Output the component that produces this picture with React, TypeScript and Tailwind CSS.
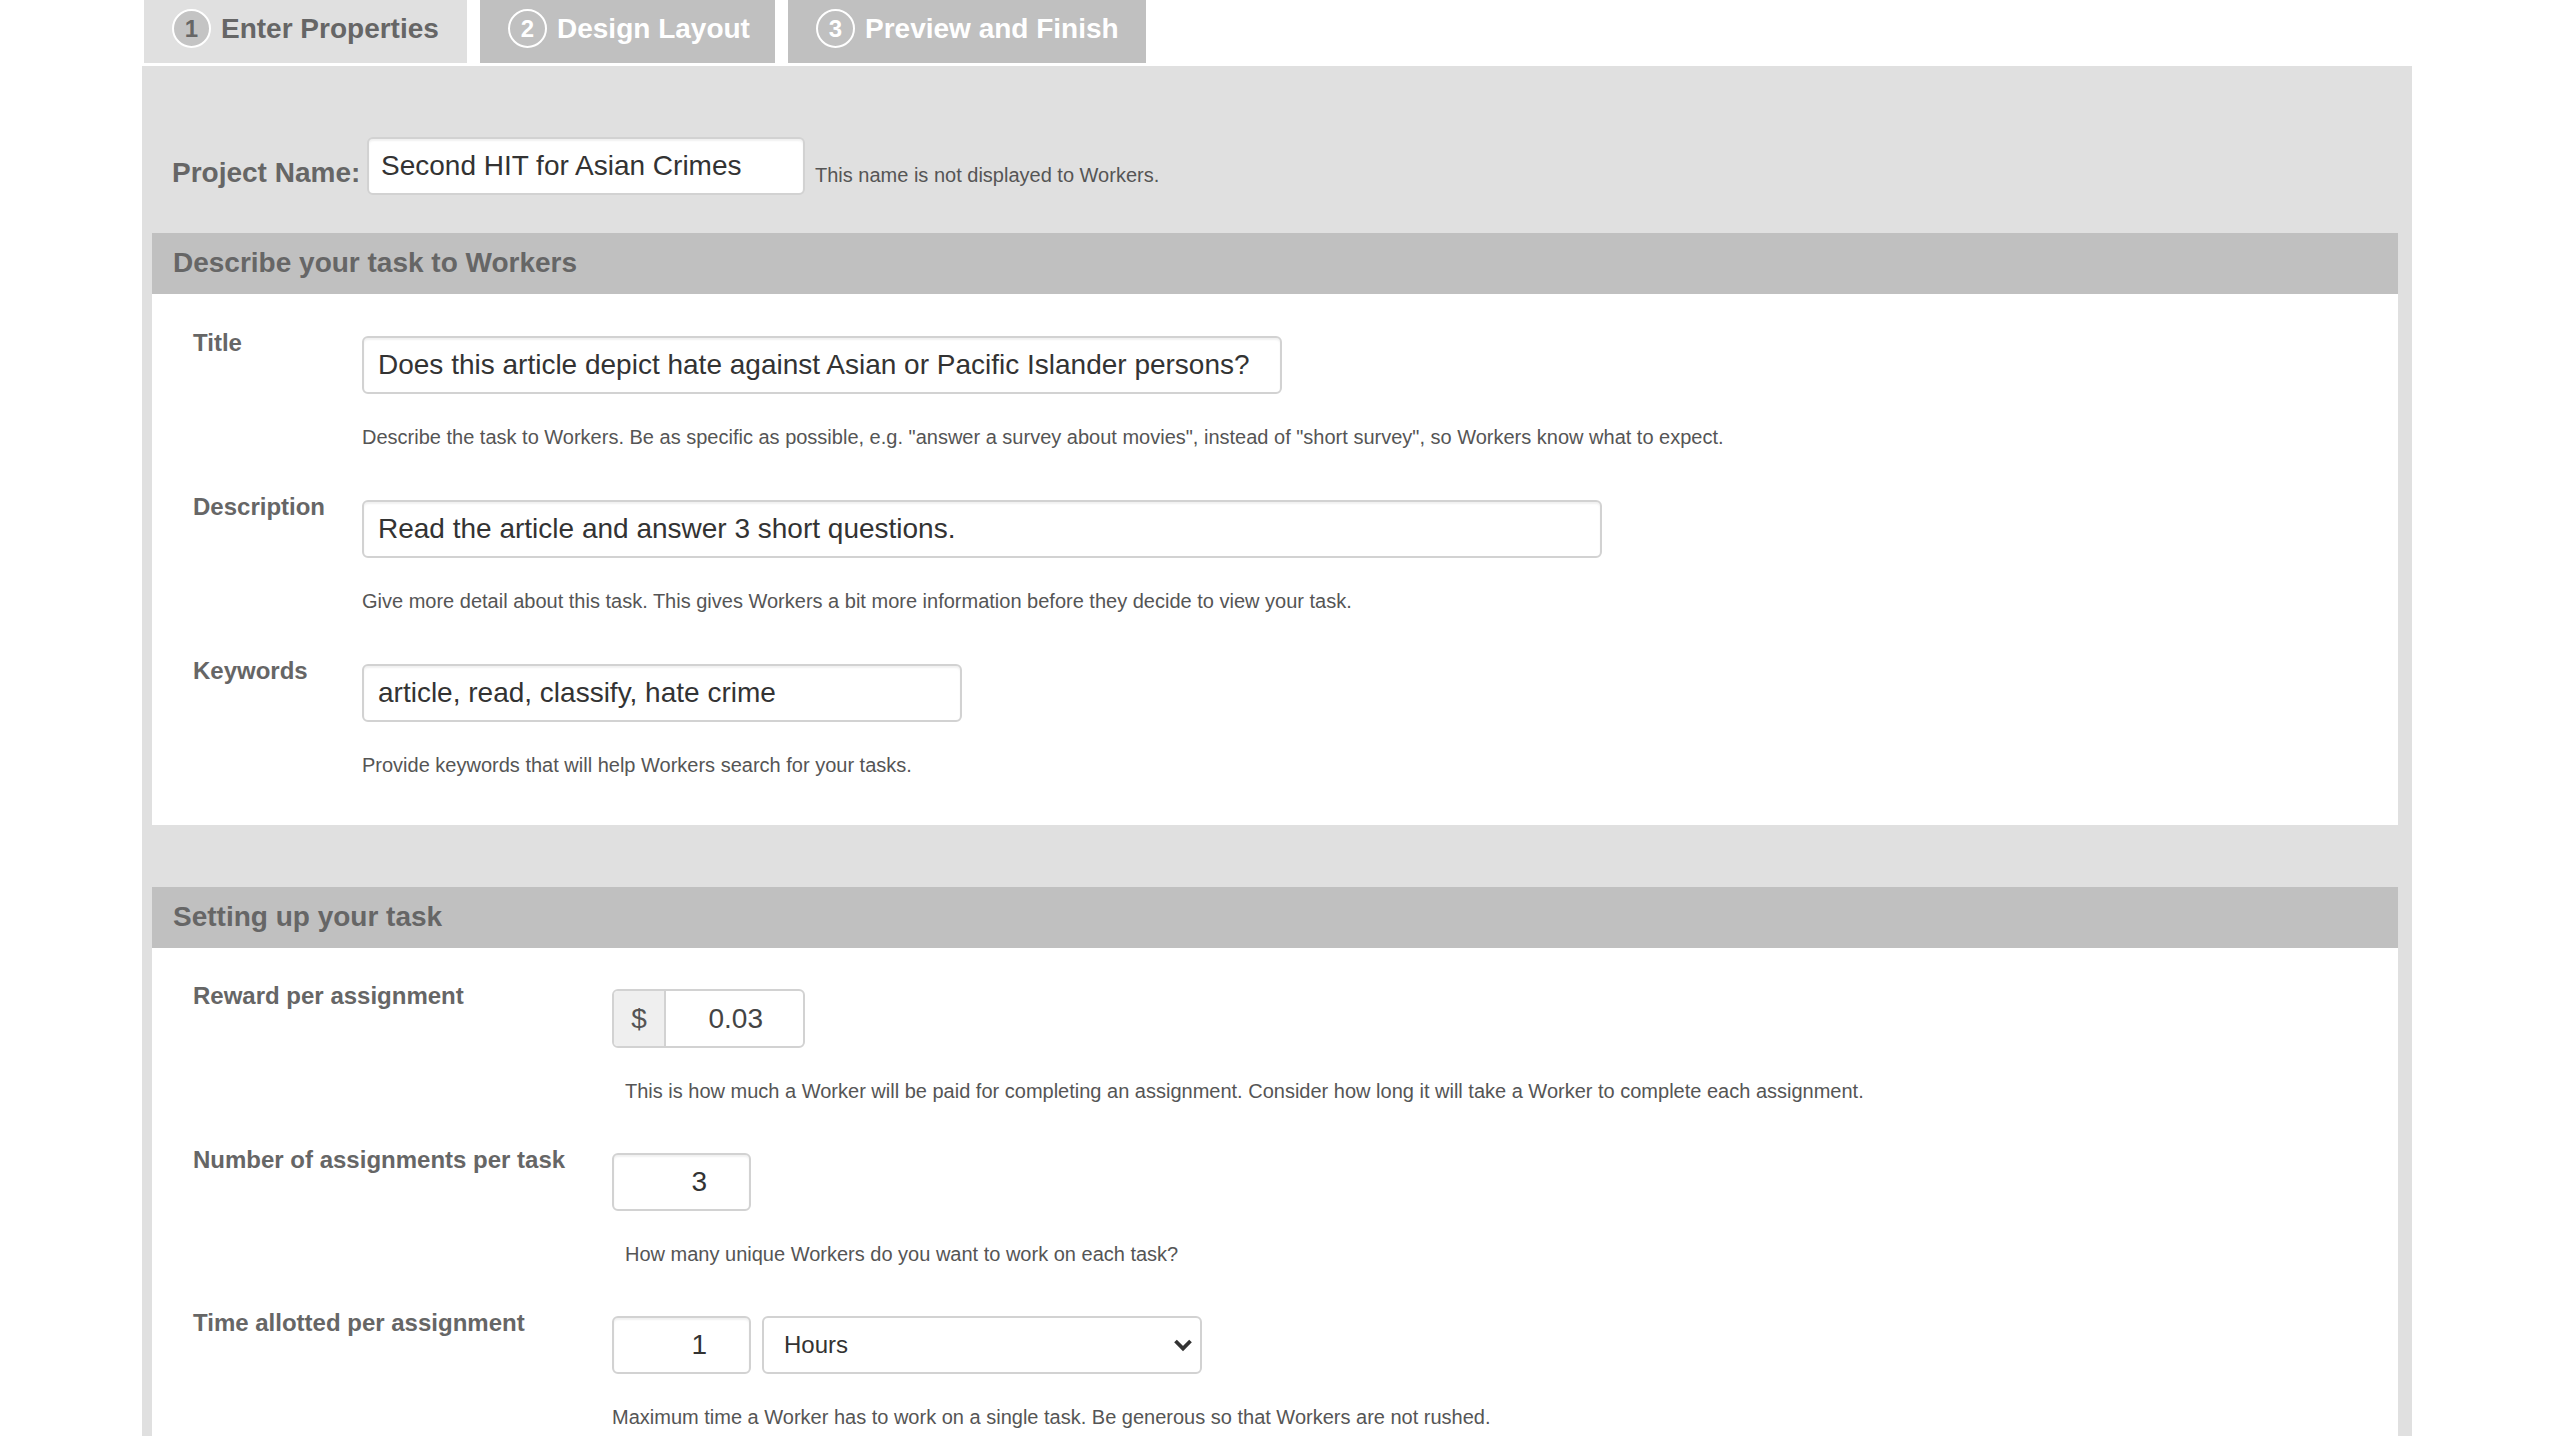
import React from 'react'

const font = "font-['Liberation_Sans',Arial,Helvetica,sans-serif]"

const tabs = [
  { n: 1, label: 'Enter Properties', active: true, width: 'w-[323px]' },
  { n: 2, label: 'Design Layout', active: false, width: 'w-[295px]' },
  { n: 3, label: 'Preview and Finish', active: false, width: 'w-[358px]' }
]

const inputCls =
  'h-[58px] rounded-[6px] border-2 border-[#d2d2d2] bg-white px-[14px] text-[28px] text-[#333] shadow-[inset_0_2px_2px_rgba(0,0,0,0.06)] outline-none'

const Row = ({
  label,
  labelWidth,
  hint,
  hintIndent,
  children
}: {
  label: string
  labelWidth: string
  hint: string
  hintIndent?: boolean
  children: React.ReactNode
}) => (
  <div className="flex">
    <div className={`${labelWidth} -mt-[7px] shrink-0 text-[24px] leading-[28px] font-bold text-[#666]`}>{label}</div>
    <div className="flex flex-col">
      {children}
      <div className={`mt-[31px] text-[20px] leading-[24px] text-[#555] ${hintIndent ? 'pl-[13px]' : ''}`}>{hint}</div>
    </div>
  </div>
)

const SectionHeader = ({ title }: { title: string }) => (
  <div className="flex h-[61px] items-center bg-[#c0c0c0] pb-[1px] pl-[21px] text-[28px] font-bold text-[#666]">{title}</div>
)

const NumberBox = ({ value, className = '' }: { value: string; className?: string }) => (
  <input readOnly value={value} className={`${inputCls} w-[139px] pr-[42px] text-right ${className}`} />
)

export default function App() {
  return (
    <div className={`min-h-screen bg-white ${font}`}>
      {/* Steps */}
      <div className="ml-[144px] flex gap-[13px]">
        {tabs.map((t) => (
          <div
            key={t.n}
            className={`${t.width} flex h-[63px] items-center gap-[10px] px-[28px] pb-[6px] ${t.active ? 'bg-[#e0e0e0]' : 'bg-[#c0c0c0]'}`}
          >
            <div
              className={`flex h-[39px] w-[39px] shrink-0 items-center justify-center rounded-full border-2 border-white text-[24px] font-bold ${
                t.active ? 'bg-[#c4c4c4] text-[#666]' : 'text-white'
              }`}
            >
              {t.n}
            </div>
            <span className={`text-[28px] font-bold whitespace-nowrap ${t.active ? 'text-[#666]' : 'text-white'}`}>{t.label}</span>
          </div>
        ))}
      </div>

      <div className="ml-[142px] mt-[3px] w-[2270px] bg-[#e0e0e0] pl-[10px] pr-[14px]">
        {/* Project name */}
        <div className="flex items-end pl-[20px] pt-[71px]">
          <div className="mb-[6px] w-[195px] text-[28px] leading-[32px] font-bold text-[#666]">Project Name:</div>
          <input readOnly value="Second HIT for Asian Crimes" className={`${inputCls} h-[57px] w-[438px] pl-[12px]`} />
          <div className="mb-[8px] ml-[10px] text-[20px] leading-[24px] text-[#555]">This name is not displayed to Workers.</div>
        </div>

        {/* Describe your task */}
        <div className="mt-[38px]">
          <SectionHeader title="Describe your task to Workers" />
          <div className="flex flex-col gap-[51px] bg-white pb-[48px] pl-[41px] pt-[42px]">
            <Row
              label="Title"
              labelWidth="w-[169px]"
              hint={'Describe the task to Workers. Be as specific as possible, e.g. "answer a survey about movies", instead of "short survey", so Workers know what to expect.'}
            >
              <input readOnly value="Does this article depict hate against Asian or Pacific Islander persons?" className={`${inputCls} w-[920px]`} />
            </Row>
            <Row
              label="Description"
              labelWidth="w-[169px]"
              hint="Give more detail about this task. This gives Workers a bit more information before they decide to view your task."
            >
              <input readOnly value="Read the article and answer 3 short questions." className={`${inputCls} w-[1240px]`} />
            </Row>
            <Row label="Keywords" labelWidth="w-[169px]" hint="Provide keywords that will help Workers search for your tasks.">
              <input readOnly value="article, read, classify, hate crime" className={`${inputCls} w-[600px]`} />
            </Row>
          </div>
        </div>

        {/* Setting up your task */}
        <div className="mt-[62px]">
          <SectionHeader title="Setting up your task" />
          <div className="flex flex-col gap-[50px] bg-white pb-[10px] pl-[41px] pt-[41px]">
            <Row
              label="Reward per assignment"
              labelWidth="w-[419px]"
              hintIndent
              hint="This is how much a Worker will be paid for completing an assignment. Consider how long it will take a Worker to complete each assignment."
            >
              <div className="flex h-[59px] w-[193px] overflow-hidden rounded-[6px] border-2 border-[#d2d2d2] bg-white">
                <div className="flex w-[52px] items-center justify-center border-r-2 border-[#d2d2d2] bg-[#efefef] text-[28px] text-[#555]">$</div>
                <input readOnly value="0.03" className="min-w-0 flex-1 pr-[40px] text-right text-[28px] text-[#444] outline-none" />
              </div>
            </Row>
            <Row
              label="Number of assignments per task"
              labelWidth="w-[419px]"
              hintIndent
              hint="How many unique Workers do you want to work on each task?"
            >
              <NumberBox value="3" />
            </Row>
            <Row
              label="Time allotted per assignment"
              labelWidth="w-[419px]"
              hint="Maximum time a Worker has to work on a single task. Be generous so that Workers are not rushed."
            >
              <div className="flex gap-[11px]">
                <NumberBox value="1" />
                <div className="relative">
                  <select
                    defaultValue="Hours"
                    className="h-[58px] w-[440px] appearance-none rounded-[6px] border-2 border-[#d2d2d2] bg-white pl-[20px] text-[24px] text-[#333] outline-none"
                  >
                    <option>Minutes</option>
                    <option>Hours</option>
                    <option>Days</option>
                  </select>
                  <svg className="pointer-events-none absolute right-[9px] top-[22px]" width="20" height="14" viewBox="0 0 20 14">
                    <path d="M2.5 3l7.5 7.5L17.5 3" fill="none" stroke="#333" strokeWidth="3.8" />
                  </svg>
                </div>
              </div>
            </Row>
          </div>
        </div>
      </div>
    </div>
  )
}
